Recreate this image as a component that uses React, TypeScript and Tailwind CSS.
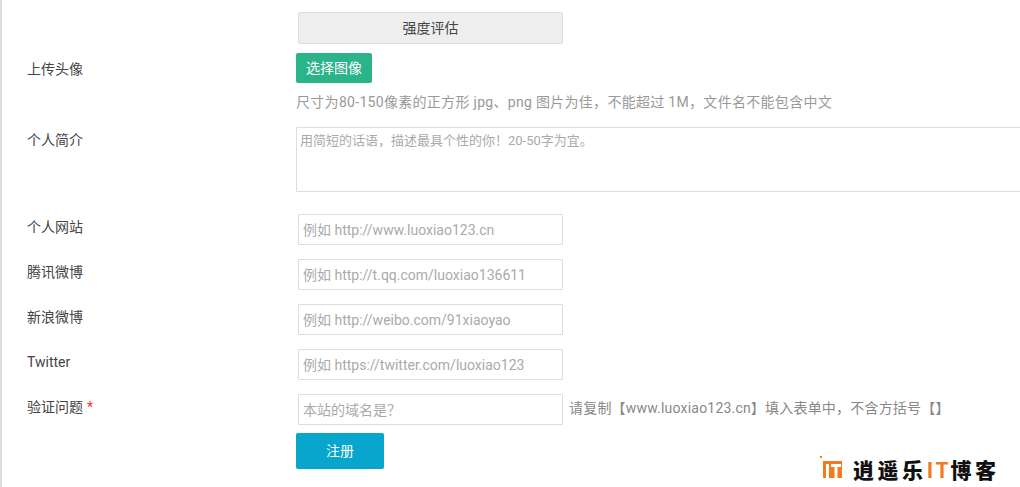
const font = { fontFamily: 'Roboto, "Noto Sans CJK SC", sans-serif' };

function Row({ label, star, mt, placeholder, note }: { label: string; star?: boolean; mt: string; placeholder: string; note?: string }) {
  return (
    <div className={`flex ${mt} h-[31px]`}>
      <div className="w-[294px] shrink-0 pl-[25px] pt-[3px] text-[14px] leading-[20px] text-[#444]">
        {label}
        {star && <span className="text-[#e33] ml-[4px]">*</span>}
      </div>
      <input
        readOnly
        placeholder={placeholder}
        className="ml-[2px] w-[265px] shrink-0 h-[31px] border border-[#ddd] px-[4px] text-[14px] text-[#999] placeholder:text-[#aaa] bg-white rounded-[1px] outline-none"
      />
      {note && <span className="ml-[6px] pt-[4px] text-[14px] leading-[20px] text-[#888] tracking-[0.2px] whitespace-nowrap">{note}</span>}
    </div>
  );
}

export default function App() {
  return (
    <div className="relative w-[1020px] h-[487px] overflow-hidden bg-white border-l-2 border-[#ddd]" style={font}>
      <div className="pt-[12px]">
        <div className="pl-[296px]">
          <button className="block w-[265px] h-[32px] bg-[#eee] border border-[#ddd] rounded-[2px] text-[14px] text-[#444]">强度评估</button>
        </div>
        <div className="flex mt-[9px] h-[30px]">
          <div className="w-[294px] pl-[25px] pt-[6px] text-[14px] leading-[20px] text-[#444]">上传头像</div>
          <button className="w-[76px] h-[30px] bg-[#2bb38a] rounded-[2px] text-[14px] text-white">选择图像</button>
        </div>
        <div className="pl-[294px] mt-[9px] h-[20px] text-[14px] leading-[20px] text-[#999] tracking-[0.3px] whitespace-nowrap">尺寸为80-150像素的正方形 jpg、png 图片为佳，不能超过 1M，文件名不能包含中文</div>
        <div className="flex mt-[15px] h-[65px]">
          <div className="w-[294px] pl-[25px] pt-[3px] text-[14px] leading-[20px] text-[#444] shrink-0">个人简介</div>
          <textarea
            readOnly
            placeholder="用简短的话语，描述最具个性的你！20-50字为宜。"
            className="w-[760px] h-[65px] shrink-0 border border-[#ddd] px-[3px] py-[3px] text-[13px] leading-[20px] placeholder:text-[#aaa] rounded-[1px] outline-none resize-none"
          />
        </div>
        <Row label="个人网站" mt="mt-[22px]" placeholder="例如 http://www.luoxiao123.cn" />
        <Row label="腾讯微博" mt="mt-[14px]" placeholder="例如 http://t.qq.com/luoxiao136611" />
        <Row label="新浪微博" mt="mt-[14px]" placeholder="例如 http://weibo.com/91xiaoyao" />
        <Row label="Twitter" mt="mt-[14px]" placeholder="例如 https://twitter.com/luoxiao123" />
        <Row label="验证问题" star mt="mt-[14px]" placeholder="本站的域名是？" note="请复制【www.luoxiao123.cn】填入表单中，不含方括号【】" />
        <div className="pl-[294px] mt-[8px]">
          <button className="w-[88px] h-[36px] bg-[#08a5cd] rounded-[2px] text-[14px] text-white">注册</button>
        </div>
      </div>
      <div className="absolute left-[818px] top-[455px] flex items-center h-[24px]">
        <svg width="24" height="24" viewBox="0 0 24 24">
          <rect x="0" y="1" width="2" height="2" fill="#f47a20" />
          <path d="M3 6H22V23H3Z" fill="#f47a20" />
          <rect x="6" y="9" width="3" height="14" fill="#fff" />
          <rect x="11" y="9" width="10" height="3" fill="#fff" />
          <rect x="14.5" y="12" width="3" height="11" fill="#fff" />
        </svg>
        <div className="ml-[9px] mt-[3px] text-[21px] leading-[24px] font-black tracking-[3.5px] whitespace-nowrap text-[#111]" style={{ fontFamily: '"Noto Sans CJK SC", sans-serif' }}>
          逍遥乐<span className="text-[#f47a20] tracking-[2px] font-bold">IT</span>博客
        </div>
      </div>
    </div>
  );
}
